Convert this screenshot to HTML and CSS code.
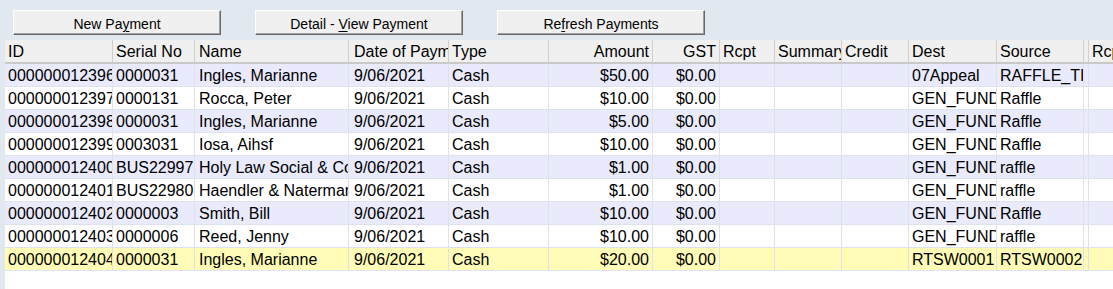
FILE: index.html
```html
<!DOCTYPE html>
<html lang="en">
<head>
<meta charset="utf-8">
<title>Payments</title>
<link rel="stylesheet" href="styles.css">
</head>
<body>
<div class="page">
  <div class="toolbar">
    <button class="btn">New Pa<u>y</u>ment</button>
    <button class="btn">Detail - <u>V</u>iew Payment</button>
    <button class="btn">Re<u>f</u>resh Payments</button>
  </div>
  <div class="table">
    <div class="row head">
      <div class="cell">ID</div><div class="cell">Serial No</div><div class="cell">Name</div><div class="cell">Date of Payment</div><div class="cell">Type</div><div class="cell num">Amount</div><div class="cell num">GST</div><div class="cell">Rcpt</div><div class="cell">Summary</div><div class="cell">Credit</div><div class="cell">Dest</div><div class="cell">Source</div><div class="cell"></div><div class="cell">Rcpt No</div>
    </div>
    <div class="row alt">
      <div class="cell">000000012396</div><div class="cell">0000031</div><div class="cell">Ingles, Marianne</div><div class="cell">9/06/2021</div><div class="cell">Cash</div><div class="cell num">$50.00</div><div class="cell num">$0.00</div><div class="cell"></div><div class="cell"></div><div class="cell"></div><div class="cell">07Appeal</div><div class="cell">RAFFLE_TICKETS</div><div class="cell"></div><div class="cell"></div>
    </div>
    <div class="row">
      <div class="cell">000000012397</div><div class="cell">0000131</div><div class="cell">Rocca, Peter</div><div class="cell">9/06/2021</div><div class="cell">Cash</div><div class="cell num">$10.00</div><div class="cell num">$0.00</div><div class="cell"></div><div class="cell"></div><div class="cell"></div><div class="cell">GEN_FUND</div><div class="cell">Raffle</div><div class="cell"></div><div class="cell"></div>
    </div>
    <div class="row alt">
      <div class="cell">000000012398</div><div class="cell">0000031</div><div class="cell">Ingles, Marianne</div><div class="cell">9/06/2021</div><div class="cell">Cash</div><div class="cell num">$5.00</div><div class="cell num">$0.00</div><div class="cell"></div><div class="cell"></div><div class="cell"></div><div class="cell">GEN_FUND</div><div class="cell">Raffle</div><div class="cell"></div><div class="cell"></div>
    </div>
    <div class="row">
      <div class="cell">000000012399</div><div class="cell">0003031</div><div class="cell">Iosa, Aihsf</div><div class="cell">9/06/2021</div><div class="cell">Cash</div><div class="cell num">$10.00</div><div class="cell num">$0.00</div><div class="cell"></div><div class="cell"></div><div class="cell"></div><div class="cell">GEN_FUND</div><div class="cell">Raffle</div><div class="cell"></div><div class="cell"></div>
    </div>
    <div class="row alt">
      <div class="cell">000000012400</div><div class="cell">BUS22997</div><div class="cell">Holy Law Social &amp; Community</div><div class="cell">9/06/2021</div><div class="cell">Cash</div><div class="cell num">$1.00</div><div class="cell num">$0.00</div><div class="cell"></div><div class="cell"></div><div class="cell"></div><div class="cell">GEN_FUND</div><div class="cell">raffle</div><div class="cell"></div><div class="cell"></div>
    </div>
    <div class="row">
      <div class="cell">000000012401</div><div class="cell">BUS22980</div><div class="cell">Haendler &amp; Naterman</div><div class="cell">9/06/2021</div><div class="cell">Cash</div><div class="cell num">$1.00</div><div class="cell num">$0.00</div><div class="cell"></div><div class="cell"></div><div class="cell"></div><div class="cell">GEN_FUND</div><div class="cell">raffle</div><div class="cell"></div><div class="cell"></div>
    </div>
    <div class="row alt">
      <div class="cell">000000012402</div><div class="cell">0000003</div><div class="cell">Smith, Bill</div><div class="cell">9/06/2021</div><div class="cell">Cash</div><div class="cell num">$10.00</div><div class="cell num">$0.00</div><div class="cell"></div><div class="cell"></div><div class="cell"></div><div class="cell">GEN_FUND</div><div class="cell">Raffle</div><div class="cell"></div><div class="cell"></div>
    </div>
    <div class="row">
      <div class="cell">000000012403</div><div class="cell">0000006</div><div class="cell">Reed, Jenny</div><div class="cell">9/06/2021</div><div class="cell">Cash</div><div class="cell num">$10.00</div><div class="cell num">$0.00</div><div class="cell"></div><div class="cell"></div><div class="cell"></div><div class="cell">GEN_FUND</div><div class="cell">raffle</div><div class="cell"></div><div class="cell"></div>
    </div>
    <div class="row sel">
      <div class="cell">000000012404</div><div class="cell">0000031</div><div class="cell">Ingles, Marianne</div><div class="cell">9/06/2021</div><div class="cell">Cash</div><div class="cell num">$20.00</div><div class="cell num">$0.00</div><div class="cell"></div><div class="cell"></div><div class="cell"></div><div class="cell">RTSW0001</div><div class="cell">RTSW0002</div><div class="cell"></div><div class="cell"></div>
    </div>
  </div>
</div>
</body>
</html>
```

FILE: styles.css
```css
html, body {
  margin: 0;
  padding: 0;
  height: 100%;
}
body {
  background: #e1e8f0;
  font-family: "Liberation Sans", Arial, sans-serif;
  color: #000;
  overflow: hidden;
}
.page {
  display: flex;
  flex-direction: column;
  height: 100%;
}
.toolbar {
  display: flex;
  gap: 34px;
  padding: 10px 0 5px 13px;
  flex: none;
}
.btn {
  box-sizing: border-box;
  width: 208px;
  height: 25px;
  margin: 0;
  padding: 3px 0 0;
  font-family: "Liberation Sans", Arial, sans-serif;
  font-size: 14px;
  line-height: 18px;
  color: #000;
  text-align: center;
  background: #f0f0f0;
  border: 1px solid;
  border-color: #ffffff #696969 #696969 #ffffff;
  box-shadow: inset -1px -1px 0 #a0a0a0;
  display: block;
}
.btn u {
  text-decoration-thickness: 1px;
  text-underline-offset: 2px;
}
.table {
  flex: 1;
  margin-left: 5px;
  background: #ffffff;
  overflow: hidden;
  font-size: 16px;
}
.row {
  display: grid;
  grid-template-columns: 108px 82px 154px 100px 100px 104px 67px 55px 67px 67px 88px 87px 5px 60px;
  height: 23px;
  width: max-content;
}
.row.alt { background: #e9eafb; }
.row.sel { background: #fefcb6; }
.cell {
  box-sizing: border-box;
  overflow: hidden;
  white-space: nowrap;
  padding: 2px 0 0 3px;
  line-height: 20px;
  border-right: 1px solid #dde2ec;
  border-bottom: 1px solid #dde2ec;
}
.cell:nth-child(3) {
  padding-left: 4px;
}
.cell:nth-child(4) {
  padding-left: 5px;
}
.cell.num {
  text-align: right;
  padding: 2px 3px 0 0;
}
.row.head {
  height: 24px;
  background: #f0f0f0;
}
.row.head .cell {
  line-height: 20px;
  padding-top: 2px;
  border-right: 1px solid #cfcfcf;
  border-bottom: 2px solid #c9c9c9;
}
.row.head .cell.num {
  padding-right: 3px;
}
```
